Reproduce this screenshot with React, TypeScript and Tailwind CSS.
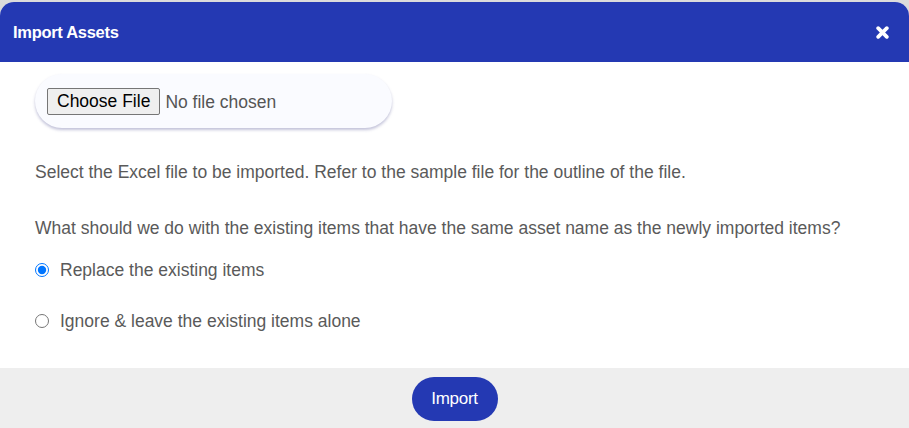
import { useState } from 'react';

function CloseIcon() {
  return (
    <svg viewBox="0 0 12 12" className="h-[13px] w-[13px]" aria-hidden="true">
      <path d="M2 2L10 10M10 2L2 10" stroke="currentColor" strokeWidth="3.4" strokeLinecap="round" />
    </svg>
  );
}

export default function App() {
  const [mode, setMode] = useState<'replace' | 'ignore'>('replace');

  return (
    <div className="h-[428px] w-[909px] overflow-hidden bg-gradient-to-b from-[#dcdcdc] to-[#8a8a8a] pt-[2px] font-['Liberation_Sans',Arial,sans-serif]">
      <div className="flex h-[440px] flex-col overflow-hidden rounded-[14px] bg-white">
        {/* Header */}
        <div className="flex h-[60px] shrink-0 items-center justify-between bg-[#2439b3] pl-[13px] pr-[20px]">
          <h1 className="text-[16.5px] font-bold tracking-[-0.3px] text-white">Import Assets</h1>
          <button className="text-white" aria-label="Close">
            <CloseIcon />
          </button>
        </div>

        {/* Body */}
        <div className="flex h-[306px] flex-col px-[35px] pt-[12px] text-[17.5px] leading-[20px] text-[#5a5a5a]">
          <div className="flex h-[54px] w-[357px] items-center rounded-full bg-[#fafbff] pl-[12px] shadow-[0_2px_3px_rgba(120,120,170,0.45)]">
            <input
              type="file"
              className="text-[17.5px] text-[#555] file:mr-[5px] file:h-[27px] file:rounded-[2px] file:border file:border-solid file:border-[#767676] file:bg-[#efefef] file:px-[9px] file:text-[17.5px] file:text-black"
            />
          </div>

          <p className="mt-[34px]">Select the Excel file to be imported. Refer to the sample file for the outline of the file.</p>
          <p className="mt-[36px]">What should we do with the existing items that have the same asset name as the newly imported items?</p>

          <label className="mt-[22px] flex items-center gap-[11px]">
            <input
              type="radio"
              name="mode"
              checked={mode === 'replace'}
              onChange={() => setMode('replace')}
              className="m-0 h-[14px] w-[14px] accent-[#0075ff]"
            />
            Replace the existing items
          </label>
          <label className="mt-[31px] flex items-center gap-[11px]">
            <input
              type="radio"
              name="mode"
              checked={mode === 'ignore'}
              onChange={() => setMode('ignore')}
              className="m-0 h-[14px] w-[14px]"
            />
            Ignore &amp; leave the existing items alone
          </label>
        </div>

        {/* Footer */}
        <div className="flex flex-1 justify-center bg-[#eeeeee] pt-[9px]">
          <button className="h-[44px] w-[86px] rounded-full bg-[#2439b3] text-[17px] tracking-[-0.3px] text-white">
            Import
          </button>
        </div>
      </div>
    </div>
  );
}
